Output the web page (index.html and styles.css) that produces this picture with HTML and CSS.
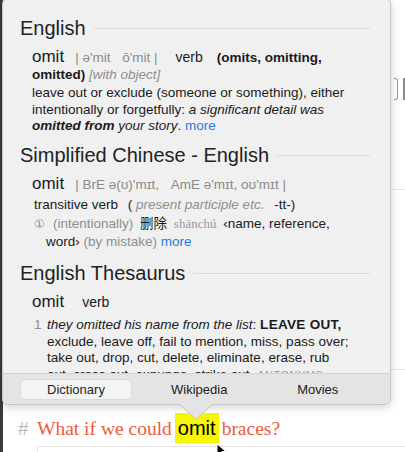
FILE: index.html
```html
<!DOCTYPE html>
<html>
<head>
<meta charset="utf-8">
<link rel="stylesheet" href="styles.css">
</head>
<body>
<div class="app">
  <div class="strip"></div>
  <div class="editor">
    <div class="toolrow">
      <span class="brk"></span><span class="brk2"></span>
    </div>
    <div class="rule rule1"></div>
    <div class="rule rule2"></div>
    <div class="h1row">
      <span class="hash">#</span>
      <h1 class="title">What if we could<span class="hl">omit</span>braces?</h1>
    </div>
    <div class="codebox"></div>
  </div>
</div>

<div class="popup">
  <div class="scroll">
    <section class="sec">
      <h2 class="sh"><span>English</span></h2>
      <div class="body">
        <div class="p"><span class="hw">omit</span><span class="pron">| ə'mit <span class="sp2">ō'mit</span> |</span><span class="pos">verb</span><b class="bx">(omits, omitting, omitted)</b> <i class="gray">[with object]</i></div>
        <div class="p def">leave out or exclude (someone or something), either intentionally or forgetfully: <i>a significant detail was <b>omitted from</b> your story</i>. <a class="more">more</a></div>
      </div>
    </section>
    <section class="sec">
      <h2 class="sh"><span>Simplified Chinese - English</span></h2>
      <div class="body">
        <div class="p"><span class="hw">omit</span><span class="pron">| BrE ə(ʊ)'mɪt, <span class="sp2">AmE ə'mɪt, oʊ'mɪt |</span></span></div>
        <div class="p tv">transitive verb <span class="par">(</span> <i class="gray">present participle etc.</i> <span class="tt">-tt-)</span></div>
        <div class="p sense"><span class="num">①</span><span class="gray">(intentionally)</span> <span class="cjk">删除</span> <span class="pin">shānchú</span> ‹name, reference, word› <span class="gray">(by mistake)</span> <a class="more">more</a></div>
      </div>
    </section>
    <section class="sec">
      <h2 class="sh"><span>English Thesaurus</span></h2>
      <div class="body">
        <div class="p"><span class="hw">omit</span><span class="pos">verb</span></div>
        <div class="p thes"><span class="tn">1</span><span class="tt2"><i>they omitted his name from the list</i>: <b class="caps">LEAVE OUT,</b> exclude, leave off, fail to mention, miss, pass over; take out, drop, cut, delete, eliminate, erase, rub out, cross out, expunge, strike out. <span class="ant">ANTONYMS</span> <a class="more">more</a></span></div>
      </div>
    </section>
  </div>
  <div class="tabs">
    <div class="tab sel">Dictionary</div>
    <div class="tab">Wikipedia</div>
    <div class="tab">Movies</div>
  </div>
  <svg class="arrow" width="34" height="16" viewBox="0 0 34 16"><path d="M0 0 L17 15 L34 0" fill="#e4e4e4" stroke="#c4c4c4" stroke-width="1"/><rect x="0" y="-2" width="34" height="2" fill="#e4e4e4"/></svg>
</div>

<svg class="cursor" width="12" height="14" viewBox="0 0 12 14"><path d="M1 1 L1 12 L4 9.5 L6 13 L8 12 L6 8.5 L10 8.5 Z" fill="#000" stroke="#fff" stroke-width="1"/></svg>
</body>
</html>
```
FILE: styles.css
```css
html, body { margin: 0; padding: 0; }
body {
  width: 405px; height: 452px; overflow: hidden; position: relative;
  background: #fff;
  font-family: "Liberation Sans", Arial, sans-serif;
}
.app { display: flex; height: 452px; }
.strip { width: 3px; background: #3a3a3a; flex: none; }
.editor { flex: 1; display: flex; flex-direction: column; }
.toolrow { margin-top: 78px; height: 22px; display: flex; justify-content: flex-end; gap: 5px; }
.brk { width: 3px; height: 20px; border: 1.5px solid #9a9a9a; border-left: none; border-radius: 0 3px 3px 0; }
.brk2 { width: 2px; height: 22px; background: #8a8a8a; }
.rule { border-top: 1px solid #e6e6e6; margin-left: 30px; }
.rule1 { margin-top: 89px; }
.rule2 { margin-top: 179px; }
.h1row { display: flex; align-items: center; margin-top: 44px; height: 29px; }
.hash { color: #b8b8b8; font-family: "Liberation Sans", sans-serif; font-size: 19px; width: 34px; padding-left: 15px; box-sizing: border-box; }
.title { margin: 0; font-family: "Liberation Serif", "DejaVu Serif", serif; font-weight: normal; font-size: 19.5px; color: #f05a3c; white-space: nowrap; }
.hl { background: #f7f700; color: #000; font-family: "Liberation Sans", sans-serif; font-size: 20px; padding: 4px 3px 4px; margin: 0 3px 0 3px; }
.codebox { margin-top: 3px; margin-left: 34px; flex: 1; border: 1px solid #e2e2e2; border-right: none; border-bottom: none; background: #fff; }

.popup {
  position: absolute; left: 2px; top: -2px; width: 389px; height: 407px;
  background: #f0f0f0; border: 1px solid #c6c6c6; border-radius: 6px;
  box-sizing: border-box;
  box-shadow: 0 2px 10px rgba(0,0,0,0.18);
  display: flex; flex-direction: column;
}
.scroll { height: 374px; overflow: hidden; padding: 0 0 0 17px; box-sizing: border-box; color: #1a1a1a; }
.sh { display: flex; align-items: center; margin: 0; font-weight: normal; font-size: 20px; color: #222; height: 24px; padding-right: 20px; }
.sh::after { content: ""; flex: 1; border-top: 1px solid #d9d9d9; margin-left: 8px; }
.sec:first-child .sh { margin-top: 17px; }
.sec:nth-child(2) .sh { margin-top: 9px; }
.sec:nth-child(3) .sh { margin-top: 11px; }
.body { padding-left: 12px; padding-right: 34px; font-size: 13.5px; line-height: 16.5px; }
.hw { font-size: 17px; }
.pron { color: #8a8a8a; font-size: 13.5px; margin-left: 11px; }
.sp2 { margin-left: 8px; }
.pos { font-size: 14px; margin-left: 18px; }
.bx { font-weight: bold; margin-left: 14px; }
.gray { color: #8e8e8e; }
.sec:first-child .body .p:first-child { margin-top: 9px; }
.def { margin-top: 2px; }
.more { color: #2a7ae2; }
.sec:nth-child(2) .body .p:first-child { margin-top: 8px; }
.tv { margin-top: 4px; padding-left: 2px; }
.par { margin-left: 6px; }
.tt { margin-left: 6px; }
.sense { margin-top: 1px; padding-left: 14px; text-indent: -12px; line-height: 18px; }
.num { color: #8e8e8e; font-size: 12px; margin-right: 8px; }
.cjk { font-family: "Noto Sans CJK SC", sans-serif; line-height: 1; margin: 0 3px; }
.pin { font-family: "Liberation Serif", serif; color: #9a9a9a; font-size: 13px; margin-right: 3px; }
.sec:nth-child(3) .body .p:first-child { margin-top: 8px; }
.thes { display: flex; margin-top: 6px; padding-right: 4px; }
.tn { color: #8e8e8e; width: 13px; padding-left: 2px; flex: none; }
.caps { font-weight: bold; letter-spacing: 0.3px; }
.ant { color: #9a9a9a; font-size: 11px; letter-spacing: 0.5px; }

.tabs {
  flex: 1; background: #e4e4e4; border-top: 1px solid #d2d2d2;
  border-radius: 0 0 5px 5px;
  display: grid; grid-template-columns: 110px 1fr 1fr; column-gap: 18px;
  align-items: center; padding: 0 22px 0 18px;
  font-size: 13px; color: #222;
}
.tab { text-align: center; height: 19px; line-height: 19px; }
.sel { background: #f4f4f4; border-radius: 4px; box-shadow: 0 0 0 0.5px #d0d0d0; }
.arrow { position: absolute; left: 176px; top: 405px; overflow: visible; }
.cursor { position: absolute; left: 216px; top: 443px; }
```
